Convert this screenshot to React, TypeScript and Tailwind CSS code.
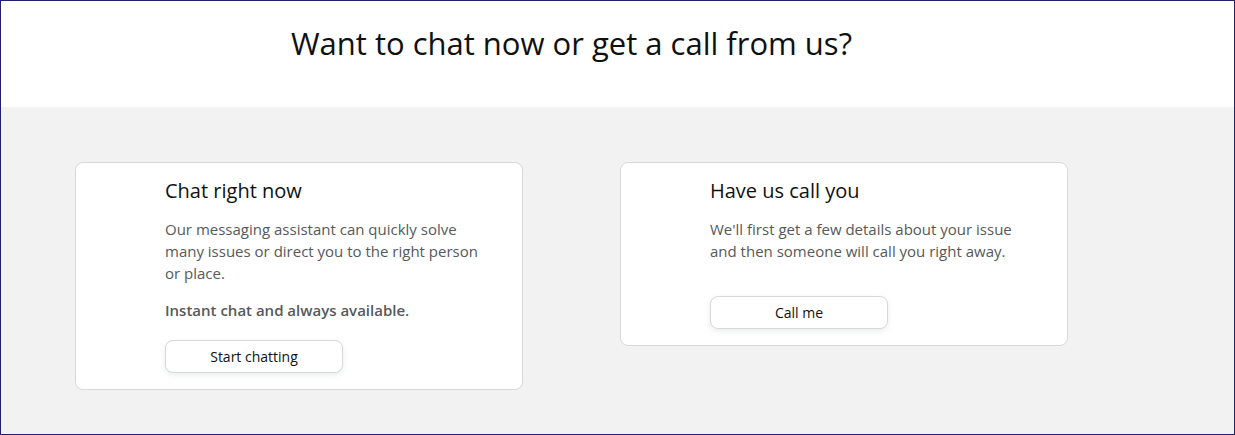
import React from "react";

const font = { fontFamily: "'Open Sans', 'Noto Sans', 'Liberation Sans', sans-serif" };

function ActionButton({ label }: { label: string }) {
  return (
    <button className="h-[33px] w-[178px] rounded-lg border border-[#d5d9d9] bg-white text-[14px] text-[#0f1111] shadow-[0_2px_5px_rgba(213,217,217,0.5)]">
      {label}
    </button>
  );
}

export default function App() {
  return (
    <div
      className="w-[1235px] h-[435px] border border-[#24206b] bg-[#f2f2f2] flex flex-col overflow-hidden"
      style={font}
    >
      <div className="h-[106px] bg-white flex-shrink-0">
        <div className="ml-[74px] w-[993px] pt-[24px] text-center">
          <h1 className="text-[31px] leading-9 text-[#0f1111]">
            Want to chat now or get a call from us?
          </h1>
        </div>
      </div>

      <div className="ml-[74px] w-[993px] pt-[55px] flex items-start gap-[97px]">
        <div className="w-[448px] rounded-lg border border-[#d5d9d9] bg-white pl-[89px] pr-[20px] pt-[16px] pb-[16px]">
          <h2 className="text-[20px] leading-6 text-[#0f1111]">Chat right now</h2>
          <p className="mt-[15px] text-[15px] leading-[22px] text-[#565959]">
            Our messaging assistant can quickly solve
            <br />
            many issues or direct you to the right person
            <br />
            or place.
          </p>
          <p className="mt-[15px] text-[15px] leading-[22px] font-semibold text-[#565959]">
            Instant chat and always available.
          </p>
          <div className="mt-[19px]">
            <ActionButton label="Start chatting" />
          </div>
        </div>

        <div className="w-[448px] rounded-lg border border-[#d5d9d9] bg-white pl-[89px] pr-[20px] pt-[16px] pb-[16px]">
          <h2 className="text-[20px] leading-6 text-[#0f1111]">Have us call you</h2>
          <p className="mt-[15px] text-[15px] leading-[22px] text-[#565959]">
            We'll first get a few details about your issue
            <br />
            and then someone will call you right away.
          </p>
          <div className="mt-[34px]">
            <ActionButton label="Call me" />
          </div>
        </div>
      </div>
    </div>
  );
}
